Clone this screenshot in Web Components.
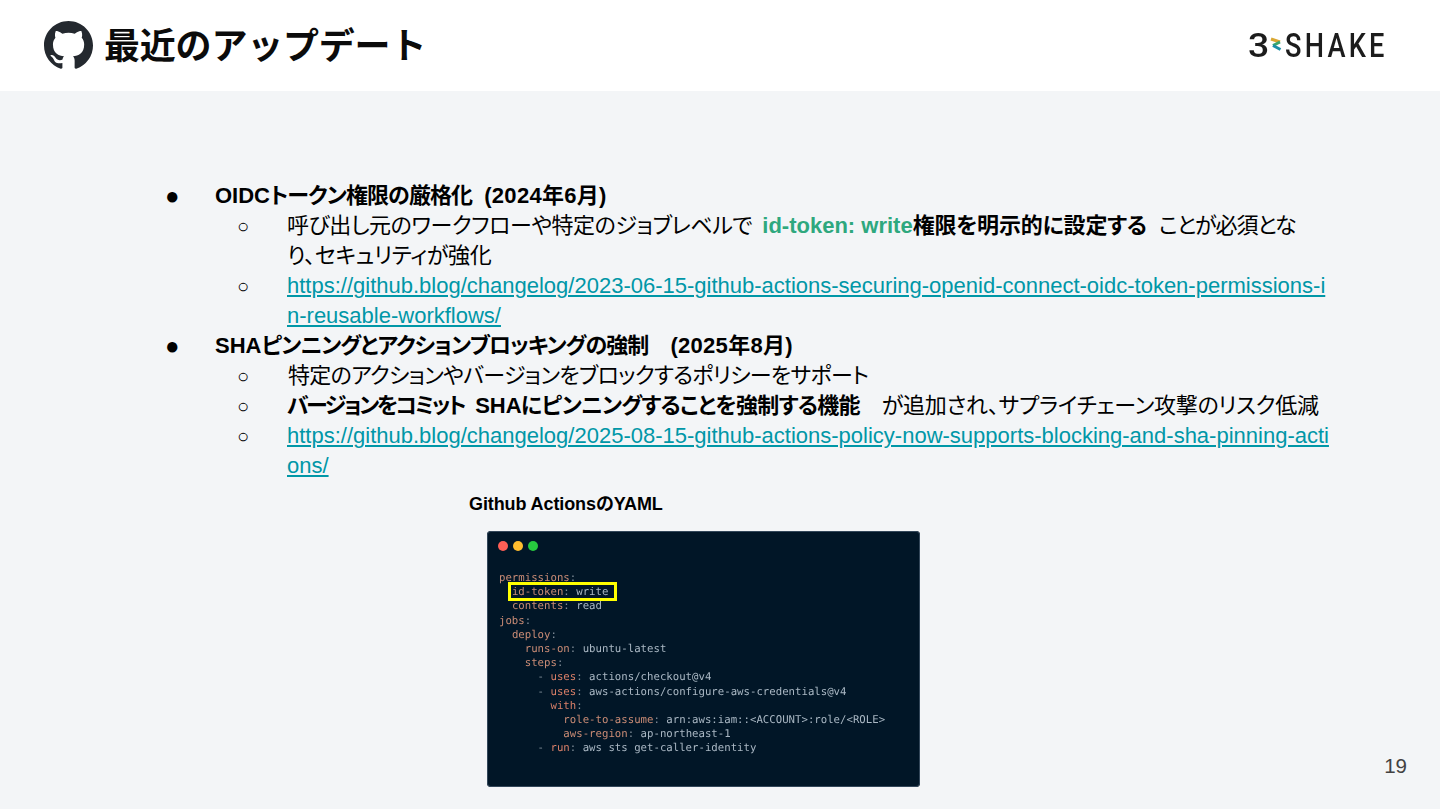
<!DOCTYPE html>
<html lang="ja"><head><meta charset="utf-8"><title>最近のアップデート</title>
<style>
html,body{margin:0;padding:0;background:#fff}
body{font-family:"Liberation Sans","Noto Sans CJK JP",sans-serif;width:1440px;height:810px;overflow:hidden}
bullet-item a{color:#0097a7;text-decoration:underline}
bullet-item .green{color:#2ea87e;margin-left:10px}
bullet-item .g1{margin-left:12px}
bullet-item .g2{margin-left:12px}
bullet-item .g3{margin-left:22px}
</style></head><body>
<slide-page>
  <slide-header slot="header">最近のアップデート</slide-header>
  <bullet-list>
    <bullet-item level="1"><b>OIDC<span style="letter-spacing:-.9px">トークン権限の厳格化</span></b><b class="g1" style="letter-spacing:.3px">(2024年6月)</b></bullet-item>
    <bullet-item level="2"><span style="letter-spacing:-.43px">呼び出し元のワークフローや特定のジョブレベルで</span><b class="green">id-token: write</b><b style="letter-spacing:-.2px">権限を明示的に設定する</b><span class="g2" style="letter-spacing:-1.1px">ことが必須とな</span><br><span style="letter-spacing:-.3px">り、セキュリティが強化</span></bullet-item>
    <bullet-item level="2"><a href="#">https://github.blog/changelog/2023-06-15-github-actions-securing-openid-connect-oidc-token-permissions-i<br>n-reusable-workflows/</a></bullet-item>
    <bullet-item level="1"><b>SHA<span style="letter-spacing:-.95px">ピンニングとアクションブロッキングの強制</span></b><b class="g3" style="letter-spacing:.3px">(2025年8月)</b></bullet-item>
    <bullet-item level="2"><span style="letter-spacing:-.67px;margin-left:1px">特定のアクションやバージョンをブロックするポリシーをサポート</span></bullet-item>
    <bullet-item level="2"><b><span style="letter-spacing:-2.4px">バージョンをコミット</span><span style="margin-left:11px">SHA</span> <span style="letter-spacing:-.7px;margin-left:-6px">にピンニングすることを強制する機能</span></b><span class="g3" style="letter-spacing:-.27px">が追加され、サプライチェーン攻撃のリスク低減</span></bullet-item>
    <bullet-item level="2"><a href="#">https://github.blog/changelog/2025-08-15-github-actions-policy-now-supports-blocking-and-sha-pinning-acti<br>ons/</a></bullet-item>
  </bullet-list>
  <code-figure caption="Github ActionsのYAML"></code-figure>
  <span slot="page">19</span>
</slide-page>
<script>
function def(name,html,init){customElements.define(name,class extends HTMLElement{
  constructor(){super();this.attachShadow({mode:'open'}).innerHTML=html;}
  connectedCallback(){if(init)init(this);}
});}
def('slide-page',`<style>
:host{display:flex;flex-direction:column;width:1440px;height:809px;background:#f3f5f7;position:relative}
.main{flex:1;display:flex;flex-direction:column;padding:90px 0 0 0;position:relative}
.page{position:absolute;right:33px;bottom:31px;font:20.5px/24px "Liberation Sans",sans-serif;color:#424242}
</style><slot name="header"></slot><div class="main"><slot></slot><div class="page"><slot name="page"></slot></div></div>`);
def('slide-header',`<style>
:host{display:flex;align-items:center;justify-content:space-between;height:91px;background:#fff;padding:0 54px 0 44px;flex:none}
.l{display:flex;align-items:center;gap:11px}
svg.gh{width:49px;height:49px;fill:#24292f;display:block}
.t{font:700 36px/49px "Noto Sans CJK JP",sans-serif;color:#0b0b0b;letter-spacing:-.2px;padding-bottom:4px}
.logo{display:flex;align-items:center;gap:3px;font-family:Roboto,sans-serif;font-weight:500;font-size:34px;line-height:34px;color:#1c1c1c;padding-bottom:2px}
.logo span{display:inline-block}
.three{transform:scaleX(1.1);transform-origin:left;margin-left:-1px}
.shake{letter-spacing:4px;transform:scaleX(.8);transform-origin:left;width:101px;white-space:nowrap}
.logo svg{display:block;width:12px;height:20px;margin-left:0}
</style><div class="l"><svg class="gh" viewBox="0 0 16 16"><path d="M8 0C3.58 0 0 3.58 0 8c0 3.54 2.29 6.53 5.47 7.59.4.07.55-.17.55-.38 0-.19-.01-.82-.01-1.49-2.01.37-2.53-.49-2.69-.94-.09-.23-.48-.94-.82-1.13-.28-.15-.68-.52-.01-.53.63-.01 1.08.58 1.23.82.72 1.21 1.87.87 2.33.66.07-.52.28-.87.51-1.07-1.78-.2-3.64-.89-3.64-3.95 0-.87.31-1.59.82-2.15-.08-.2-.36-1.02.08-2.12 0 0 .67-.21 2.2.82.64-.18 1.32-.27 2-.27.68 0 1.36.09 2 .27 1.53-1.04 2.2-.82 2.2-.82.44 1.1.16 1.92.08 2.12.51.56.82 1.27.82 2.15 0 3.07-1.87 3.75-3.65 3.95.29.25.54.73.54 1.48 0 1.07-.01 1.93-.01 2.2 0 .21.15.46.55.38A8.013 8.013 0 0016 8c0-4.42-3.58-8-8-8z"/></svg><div class="t"><slot></slot></div></div>
<div class="logo"><span class="three">3</span><svg viewBox="0 0 12 20"><path d="M1 4l9 3" stroke="#d9a733" stroke-width="3" fill="none"/><path d="M10 7L3 10.5" stroke="#3aa66e" stroke-width="3" fill="none"/><path d="M3 10.5l7.5 4" stroke="#1b8fa8" stroke-width="3" fill="none"/></svg><span class="shake">SHAKE</span></div>`);
def('bullet-list',`<style>:host{display:block}</style><slot></slot>`);
def('bullet-item',`<style>
:host{display:flex;font:22px/30px "Liberation Sans","Noto Sans CJK JP",sans-serif;color:#000;white-space:nowrap;font-feature-settings:"palt"}
:host([level="1"]){padding-left:165px}
:host([level="2"]){padding-left:237px}
.m{flex:none;width:50px;font-size:20px}
:host([level="1"]) .m{font-size:24px}
</style><span class="m"></span><span class="c"><slot></slot></span>`,
e=>{e.shadowRoot.querySelector('.m').textContent=e.getAttribute('level')==='1'?'●':'○';});
def('code-figure',`<style>
:host{display:block;padding:8px 0 0 469px}
.cap{font:700 18px/30px "Liberation Sans","Noto Sans CJK JP",sans-serif;color:#000;letter-spacing:-.1px}
.card{margin:12px 0 0 18px;width:433px;height:256px;box-sizing:border-box;border-radius:4px;background:#011627;padding:9px 11px;box-shadow:0 0 0 1px #33475a inset}
.dots{display:flex;gap:5px;height:12px;align-items:center}
.dots i{width:10px;height:10px;border-radius:50%}
.code{margin:19px 0 0 1px;font:10.7px/14.2px "DejaVu Sans Mono",monospace;color:#a9b7c3;text-rendering:geometricPrecision;filter:blur(.25px)}
.code div{white-space:pre;height:14.2px}
.k{color:#c98b75}.u{color:#d97f68}.p{color:#7f8c97}
.hl{outline:3px solid #ffff00;padding:0 6px 0 1px;margin:0 -6px 0 -1px}
</style><div class="cap">Github ActionsのYAML</div>
<div class="card"><div class="dots"><i style="background:#ff5f56"></i><i style="background:#ffbd2e"></i><i style="background:#27c93f"></i></div>
<div class="code"><div><span class="k">permissions</span><span class="p">:</span></div>
<div>  <span class="hl"><span class="k">id-token</span><span class="p">:</span> write</span></div>
<div>  <span class="k">contents</span><span class="p">:</span> read</div>
<div><span class="k">jobs</span><span class="p">:</span></div>
<div>  <span class="k">deploy</span><span class="p">:</span></div>
<div>    <span class="k">runs-on</span><span class="p">:</span> ubuntu-latest</div>
<div>    <span class="k">steps</span><span class="p">:</span></div>
<div>      <span class="p">-</span> <span class="u">uses</span><span class="p">:</span> actions/checkout@v4</div>
<div>      <span class="p">-</span> <span class="u">uses</span><span class="p">:</span> aws-actions/configure-aws-credentials@v4</div>
<div>        <span class="u">with</span><span class="p">:</span></div>
<div>          <span class="k">role-to-assume</span><span class="p">:</span> arn:aws:iam::&lt;ACCOUNT&gt;:role/&lt;ROLE&gt;</div>
<div>          <span class="k">aws-region</span><span class="p">:</span> ap-northeast-1</div>
<div>      <span class="p">-</span> <span class="u">run</span><span class="p">:</span> aws sts get-caller-identity</div></div></div>`);
</script>
</body></html>
